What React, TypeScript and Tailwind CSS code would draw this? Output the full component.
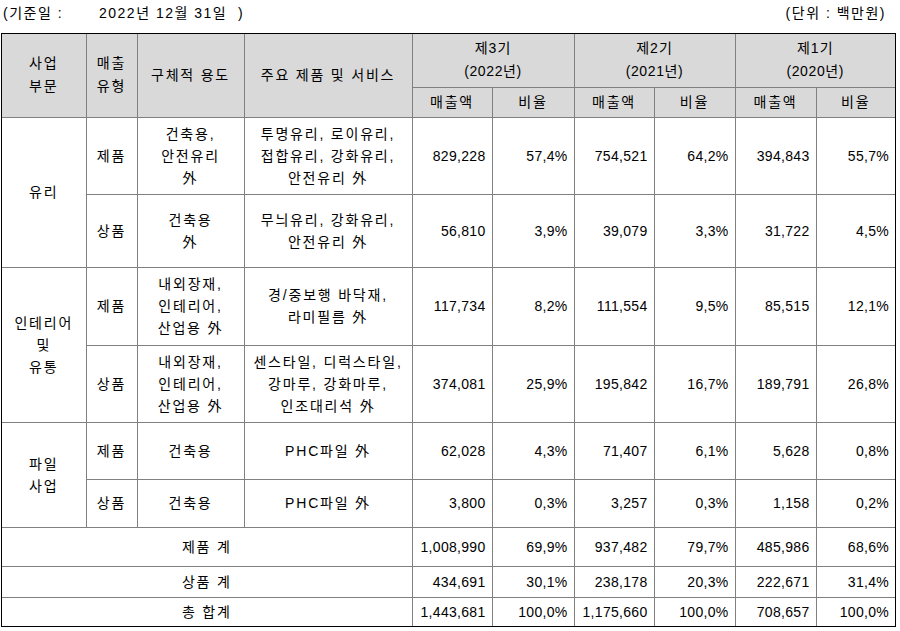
import React from 'react';

const font = { fontFamily: '"Liberation Sans", "Noto Sans CJK KR", sans-serif' };

const cell = 'border border-[#808080] text-center align-middle px-1 leading-[22px] tracking-[1.8px]';
const num = 'border border-[#808080] text-right align-middle pr-[6px] leading-[22px] tracking-[0.3px]';
const head = 'border border-[#808080] bg-[#d9d9d9] text-center align-middle leading-[23px] font-normal';

type Row = {
    h: string;
    group?: { label: string[]; span: number };
    kind: string;
    usage: string[];
    items: string[];
    vals: string[];
};

const rows: Row[] = [
    {
        h: 'h-[77px]',
        group: { label: ['유리'], span: 2 },
        kind: '제품',
        usage: ['건축용,', '안전유리', '外'],
        items: ['투명유리, 로이유리,', '접합유리, 강화유리,', '안전유리 外'],
        vals: ['829,228', '57,4%', '754,521', '64,2%', '394,843', '55,7%'],
    },
    {
        h: 'h-[73px]',
        kind: '상품',
        usage: ['건축용', '外'],
        items: ['무늬유리, 강화유리,', '안전유리 外'],
        vals: ['56,810', '3,9%', '39,079', '3,3%', '31,722', '4,5%'],
    },
    {
        h: 'h-[78px]',
        group: { label: ['인테리어', '및', '유통'], span: 2 },
        kind: '제품',
        usage: ['내외장재,', '인테리어,', '산업용 外'],
        items: ['경/중보행 바닥재,', '라미필름 外'],
        vals: ['117,734', '8,2%', '111,554', '9,5%', '85,515', '12,1%'],
    },
    {
        h: 'h-[77px]',
        kind: '상품',
        usage: ['내외장재,', '인테리어,', '산업용 外'],
        items: ['센스타일, 디럭스타일,', '강마루, 강화마루,', '인조대리석 外'],
        vals: ['374,081', '25,9%', '195,842', '16,7%', '189,791', '26,8%'],
    },
    {
        h: 'h-[57px]',
        group: { label: ['파일', '사업'], span: 2 },
        kind: '제품',
        usage: ['건축용'],
        items: ['PHC파일 外'],
        vals: ['62,028', '4,3%', '71,407', '6,1%', '5,628', '0,8%'],
    },
    {
        h: 'h-[48px]',
        kind: '상품',
        usage: ['건축용'],
        items: ['PHC파일 外'],
        vals: ['3,800', '0,3%', '3,257', '0,3%', '1,158', '0,2%'],
    },
];

const totals = [
    { h: 'h-[39px]', label: '제품 계', vals: ['1,008,990', '69,9%', '937,482', '79,7%', '485,986', '68,6%'] },
    { h: 'h-[31px]', label: '상품 계', vals: ['434,691', '30,1%', '238,178', '20,3%', '222,671', '31,4%'] },
    { h: 'h-[29px]', label: '총 합계', vals: ['1,443,681', '100,0%', '1,175,660', '100,0%', '708,657', '100,0%'] },
];

const Lines = ({ lines }: { lines: string[] }) => (
    <>
        {lines.map((l, i) => (
            <div key={i} className="whitespace-nowrap">{l}</div>
        ))}
    </>
);

const Period = ({ no, year }: { no: string; year: string }) => (
    <th colSpan={2} className={head}>
        <div className="tracking-[1px]">{no}</div>
        <div className="tracking-[0.6px]">({year}년)</div>
    </th>
);

export default function App() {
    return (
        <div className="w-[900px] h-[631px] bg-white text-[14px] text-black" style={font}>
            <div className="h-[33px] flex justify-between pt-[2px] pl-[3px] pr-[14px] leading-[22px] tracking-[1.5px]">
                <div className="flex whitespace-pre">
                    <span className="w-[96px]">(기준일 :</span>
                    <span className="w-[139px]">2022년 12월 31일</span>
                    <span>)</span>
                </div>
                <div>(단위 : 백만원)</div>
            </div>

            <div className="ml-[1px] w-[895px] border border-black">
                <table className="w-full table-fixed border-collapse border-hidden">
                    <colgroup>
                        <col className="w-[84px]" />
                        <col className="w-[51px]" />
                        <col className="w-[107px]" />
                        <col className="w-[168px]" />
                        <col className="w-[80px]" />
                        <col className="w-[82px]" />
                        <col className="w-[80px]" />
                        <col className="w-[81px]" />
                        <col className="w-[81px]" />
                        <col className="w-[79px]" />
                    </colgroup>
                    <thead>
                        <tr className="h-[53px]">
                            <th rowSpan={2} className={`${head} tracking-[1.8px]`}><Lines lines={['사업', '부문']} /></th>
                            <th rowSpan={2} className={`${head} tracking-[1.8px]`}><Lines lines={['매출', '유형']} /></th>
                            <th rowSpan={2} className={`${head} tracking-[1.8px]`}>구체적 용도</th>
                            <th rowSpan={2} className={`${head} tracking-[1.8px]`}>주요 제품 및 서비스</th>
                            <Period no="제3기" year="2022" />
                            <Period no="제2기" year="2021" />
                            <Period no="제1기" year="2020" />
                        </tr>
                        <tr className="h-[30px]">
                            {['매출액', '비율', '매출액', '비율', '매출액', '비율'].map((t, i) => (
                                <th key={i} className={`${head} tracking-[1.8px]`}>{t}</th>
                            ))}
                        </tr>
                    </thead>
                    <tbody>
                        {rows.map((r, i) => (
                            <tr key={i} className={r.h}>
                                {r.group && (
                                    <td rowSpan={r.group.span} className={cell}><Lines lines={r.group.label} /></td>
                                )}
                                <td className={cell}>{r.kind}</td>
                                <td className={cell}><Lines lines={r.usage} /></td>
                                <td className={cell}><Lines lines={r.items} /></td>
                                {r.vals.map((v, j) => (
                                    <td key={j} className={num}>{v}</td>
                                ))}
                            </tr>
                        ))}
                        {totals.map((t, i) => (
                            <tr key={i} className={t.h}>
                                <td colSpan={4} className={cell}>{t.label}</td>
                                {t.vals.map((v, j) => (
                                    <td key={j} className={num}>{v}</td>
                                ))}
                            </tr>
                        ))}
                    </tbody>
                </table>
            </div>
        </div>
    );
}
